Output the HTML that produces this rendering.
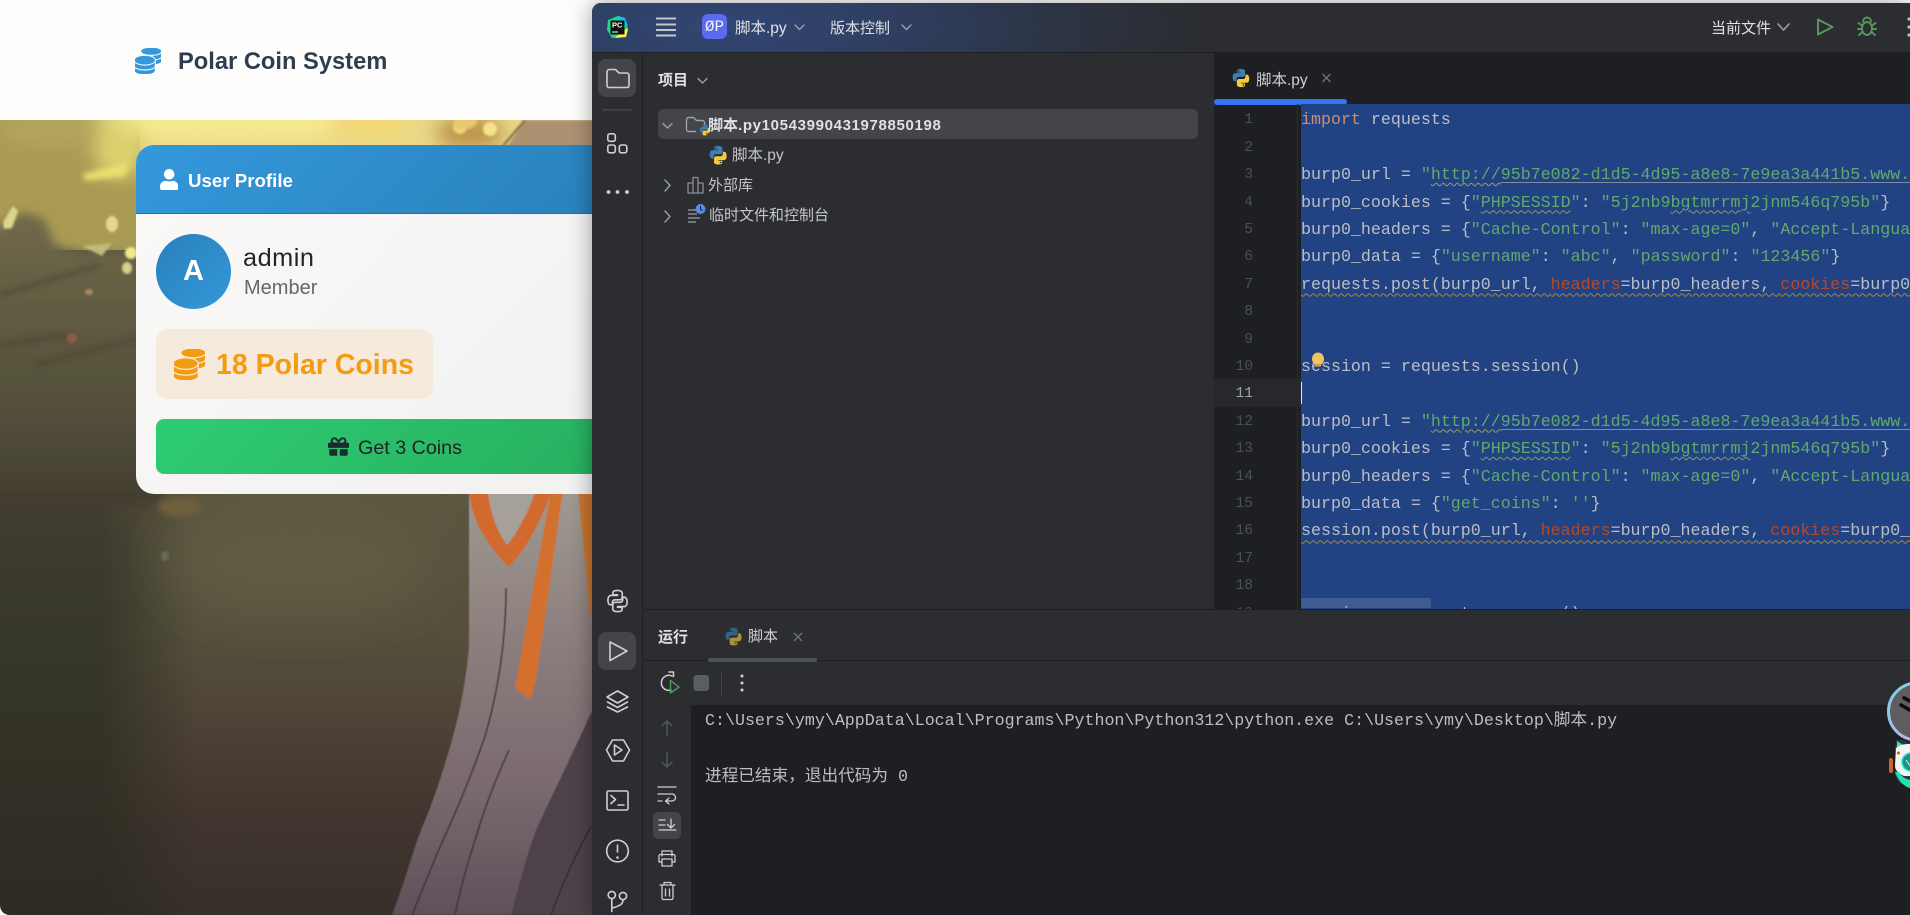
<!DOCTYPE html>
<html lang="zh-CN">
<head>
<meta charset="utf-8">
<title>Polar Coin System</title>
<style>
html,body{margin:0;padding:0;width:1910px;height:915px;overflow:hidden;background:#fff}
body{position:relative;font-family:"Liberation Sans","Noto Sans CJK SC",sans-serif}
.a{position:absolute}
.t{position:absolute;white-space:nowrap;line-height:30px;height:30px}
.ui{color:#dfe1e5;font-size:15px}
.c{position:absolute;left:0;white-space:pre;height:27.4px;line-height:27.4px}
.code{font-family:"Liberation Mono","Noto Sans CJK SC",monospace;font-size:16.65px;color:#bcbec4}
.s{color:#62a870}.k{color:#cf8e6d}.p{color:#b4492a}
.u{text-decoration:underline;text-decoration-color:#7d8aa5;text-underline-offset:3px}
.w1{text-decoration:underline wavy #9aa05a 1px;text-underline-offset:3px}
.w2{text-decoration:underline wavy #8d9a5f 1px;text-underline-offset:3px}
.warn{text-decoration:underline wavy #a08a4a 1px;text-underline-offset:4px}
.n{position:absolute;width:40px;left:1213px;text-align:right;font-family:"Liberation Mono",monospace;font-size:14.6px;height:27.4px;line-height:29.4px;color:#4b5059}
</style>
</head>
<body>

<!-- page background painting -->
<div class="a" style="left:0;top:120px;width:600px;height:795px;background:linear-gradient(180deg,#5c5840 360px,#55503c 512px,#4c4136 612px,#40352e 700px,#36302a 795px)"></div>
<div class="a" style="left:0;top:494px;width:200px;height:421px;background:linear-gradient(180deg,#423d31 0,#38382b 110px,#2e2b22 421px);-webkit-mask-image:linear-gradient(90deg,#000 100px,transparent 195px);mask-image:linear-gradient(90deg,#000 100px,transparent 195px)"></div>
<svg class="a" style="left:0;top:0" width="600" height="915" viewBox="0 0 600 915">
<defs>
<filter id="b30" x="-60%" y="-60%" width="220%" height="220%"><feGaussianBlur stdDeviation="24"/></filter>
<filter id="b10" x="-40%" y="-40%" width="180%" height="180%"><feGaussianBlur stdDeviation="9"/></filter>
<filter id="b5" x="-20%" y="-20%" width="140%" height="140%"><feGaussianBlur stdDeviation="5"/></filter>
<filter id="b3" x="-40%" y="-40%" width="180%" height="180%"><feGaussianBlur stdDeviation="3"/></filter>
<filter id="b1" x="-20%" y="-20%" width="140%" height="140%"><feGaussianBlur stdDeviation="1"/></filter>
<filter id="b05" x="-20%" y="-20%" width="140%" height="140%"><feGaussianBlur stdDeviation=".5"/></filter>
<linearGradient id="ridge" gradientUnits="userSpaceOnUse" x1="0" y1="230" x2="0" y2="500">
<stop offset="0" stop-color="#6e6749"/><stop offset=".35" stop-color="#5e5a40"/><stop offset=".7" stop-color="#524d3a"/><stop offset="1" stop-color="#423d31"/>
</linearGradient>
<linearGradient id="fig" x1="0" y1="0" x2="0" y2="1">
<stop offset="0" stop-color="#a09c92"/><stop offset=".4" stop-color="#8b7c7c"/><stop offset=".7" stop-color="#7a6a70"/><stop offset="1" stop-color="#5f5059"/>
</linearGradient>
</defs>
<rect x="0" y="120" width="600" height="130" fill="#a99b54"/>
<rect x="140" y="120" width="460" height="30" fill="#e8d888"/>
<g filter="url(#b30)">
<ellipse cx="300" cy="560" rx="130" ry="55" fill="#5f5b42"/>
</g>
<g filter="url(#b10)">
<ellipse cx="230" cy="122" rx="150" ry="20" fill="#f6e88f"/>
<ellipse cx="55" cy="130" rx="60" ry="16" fill="#b5a45c"/>
<ellipse cx="120" cy="150" rx="26" ry="28" fill="#dcd06e"/>
<ellipse cx="370" cy="125" rx="42" ry="16" fill="#f3d878"/>
<ellipse cx="470" cy="133" rx="34" ry="18" fill="#bd9650"/>
</g>
<path filter="url(#b5)" d="M-30 505V240L25 212L45 220L55 245L85 253L160 255V505Z" fill="url(#ridge)"/>
<g filter="url(#b3)">
<path d="M83 174l47-13-5 15-40 5z" fill="#e8e070"/>
<ellipse cx="180" cy="507" rx="22" ry="10" fill="#6e5f3c"/>
<g fill="none" stroke="#3f3b2c" stroke-width="4" opacity=".55">
<path d="M0 295L100 265"/>
<path d="M0 345L70 335"/>
<path d="M35 365L140 338"/>
</g>
</g>
<g filter="url(#b1)">
<path d="M3 222l10-16 5 5-6 17-8 1z" fill="#dcd68c"/>
<ellipse cx="112" cy="224" rx="6" ry="8" fill="#e4da88"/>
<ellipse cx="131" cy="253" rx="6" ry="6" fill="#f2e78e"/>
<ellipse cx="127" cy="268" rx="5" ry="6" fill="#d8cf88"/>
<path d="M82 246l30-3-10 13z" fill="#c2b879"/>
<ellipse cx="89" cy="292" rx="4" ry="3" fill="#a88a62"/>
<ellipse cx="72" cy="338" rx="5" ry="5" fill="#8f5a48"/>
<ellipse cx="165" cy="556" rx="4" ry="5" fill="#6a6c52"/>
<ellipse cx="460" cy="127" rx="7" ry="7" fill="#f0d278"/>
<ellipse cx="490" cy="129" rx="7" ry="7" fill="#f6e28a"/>
<ellipse cx="465" cy="122" rx="12" ry="7" fill="#e9c670"/>
<path d="M525 120L600 120V150H505Z" fill="#ad9272"/>
<path d="M525 120L503 146" stroke="#7a5a38" stroke-width="2"/>
</g>
<!-- figure -->
<g filter="url(#b05)">
<path d="M469 480L469 647C466 680 460 712 452 740C442 775 432 805 421 830C410 860 402 890 392 915H600V480Z" fill="url(#fig)"/>
<path d="M600 700L591 713C572 755 552 795 536 830C525 860 518 890 511 915H600Z" fill="#4d4249"/>
<path d="M469 490C470 510 478 528 490 545C497 555 503 562 509 567C525 550 540 525 552 490H536C528 512 518 532 507 545C498 532 490 515 488 490Z" fill="#d2692f"/>
<path d="M488 490C490 515 498 532 507 545C518 532 528 512 536 490Z" fill="#a5a198"/>
<path d="M551 490H563L536 680L530 700L515 688Z" fill="#d4702d"/>
<path d="M578 490H592V622L590 615Z" fill="#c9752f"/>
<path d="M506 588C506 640 498 690 486 733C472 775 456 812 440 847C430 870 421 893 412 915" fill="none" stroke="#3f3238" stroke-width="1.5"/>
<path d="M509 750C495 780 484 810 475 840C467 865 460 890 455 915" fill="none" stroke="#3f3238" stroke-width="1.5"/>
<path d="M591 827C575 855 562 885 551 915" fill="none" stroke="#332a30" stroke-width="1.5"/>
</g>
<path d="M0 905V915H10C4 915 0 911 0 905Z" fill="#fff"/>
</svg>

<!-- page header -->
<div class="a" style="left:0;top:0;width:600px;height:120px;background:#fefdfb"></div>
<svg class="a" style="left:135px;top:48px" width="26" height="26" viewBox="0 0 512 512"><path fill="#3498db" stroke="#3498db" stroke-width="12" d="M0 405.3V448c0 35.3 86 64 192 64s192-28.7 192-64v-42.7C342.7 434.4 267.2 448 192 448S41.3 434.4 0 405.3zM320 128c106 0 192-28.7 192-64S426 0 320 0 128 28.7 128 64s86 64 192 64zM0 300.4V352c0 35.3 86 64 192 64s192-28.7 192-64v-51.6c-41.3 34-116.9 51.6-192 51.6S41.3 334.4 0 300.4zm416 11c57.3-11.1 96-31.7 96-55.4v-42.7c-23.2 16.4-57.3 27.6-96 34.5v63.6zM192 160C86 160 0 195.8 0 240s86 80 192 80 192-35.8 192-80-86-80-192-80zm219.3 56.3c60-10.8 100.7-32 100.7-56.3v-42.7c-35.5 25.1-96.5 38.6-160.7 41.8 29.5 14.3 51.2 33.5 60 57.2z"/></svg>
<div class="t" style="left:178px;top:47px;font-size:23.7px;font-weight:700;color:#2c3e50">Polar Coin System</div>

<!-- card -->
<div class="a" style="left:136px;top:145px;width:500px;height:349px;border-radius:18px;overflow:hidden;background:linear-gradient(135deg,#fbfaf7,#f5f4f4 55%,#f2f1ef)">
  <div class="a" style="left:0;top:0;width:100%;height:69px;background:linear-gradient(135deg,#3498db,#2980b9);border-bottom:1px solid #2471a3;box-sizing:border-box"></div>
  <div class="a" style="left:20px;top:89px;width:75px;height:75px;border-radius:50%;background:linear-gradient(135deg,#2980b9,#3498db)"></div>
  <div class="a" style="left:20px;top:184px;width:277px;height:70px;border-radius:12px;background:#f5eadc"></div>
  <div class="a" style="left:20px;top:274px;width:480px;height:55px;border-radius:8px;background:linear-gradient(135deg,#2ecc71,#27ae60)"></div>
</div>
<svg class="a" style="left:160px;top:169px" width="18.4" height="21" viewBox="0 0 448 512"><path fill="#fff" d="M224 256c70.7 0 128-57.3 128-128S294.7 0 224 0 96 57.3 96 128s57.3 128 128 128zm89.6 32h-16.7c-22.2 10.2-46.9 16-72.9 16s-50.6-5.8-72.9-16h-16.7C60.2 288 0 348.2 0 422.4V464c0 26.5 21.5 48 48 48h352c26.5 0 48-21.5 48-48v-41.6c0-74.2-60.2-134.4-134.4-134.4z"/></svg>
<div class="t" style="left:188px;top:166px;font-size:18.7px;font-weight:700;color:#fff">User Profile</div>
<div class="t" style="left:156px;top:256px;width:75px;text-align:center;font-size:29px;font-weight:700;color:#fff">A</div>
<div class="t" style="left:243px;top:243px;font-size:25.3px;color:#212529;letter-spacing:.5px">admin</div>
<div class="t" style="left:244px;top:273px;font-size:20px;color:#666">Member</div>
<svg class="a" style="left:174px;top:349px" width="31" height="31" viewBox="0 0 512 512"><path fill="#f39c12" stroke="#f39c12" stroke-width="12" d="M0 405.3V448c0 35.3 86 64 192 64s192-28.7 192-64v-42.7C342.7 434.4 267.2 448 192 448S41.3 434.4 0 405.3zM320 128c106 0 192-28.7 192-64S426 0 320 0 128 28.7 128 64s86 64 192 64zM0 300.4V352c0 35.3 86 64 192 64s192-28.7 192-64v-51.6c-41.3 34-116.9 51.6-192 51.6S41.3 334.4 0 300.4zm416 11c57.3-11.1 96-31.7 96-55.4v-42.7c-23.2 16.4-57.3 27.6-96 34.5v63.6zM192 160C86 160 0 195.8 0 240s86 80 192 80 192-35.8 192-80-86-80-192-80zm219.3 56.3c60-10.8 100.7-32 100.7-56.3v-42.7c-35.5 25.1-96.5 38.6-160.7 41.8 29.5 14.3 51.2 33.5 60 57.2z"/></svg>
<div class="t" style="left:216px;top:350px;font-size:28.5px;font-weight:700;color:#f39c12">18 Polar Coins</div>
<svg class="a" style="left:328px;top:436px" width="21" height="21" viewBox="0 0 512 512"><path fill="#1f2a30" d="M32 448c0 17.7 14.3 32 32 32h160V320H32v128zm256 32h160c17.7 0 32-14.3 32-32V320H288v160zm192-320h-42.1c6.2-12.1 10.1-25.5 10.1-40 0-48.5-39.5-88-88-88-41.6 0-68.5 21.3-103 68.3-34.5-47-61.4-68.3-103-68.3-48.5 0-88 39.5-88 88 0 14.5 3.8 27.9 10.1 40H32c-17.7 0-32 14.3-32 32v80c0 8.8 7.2 16 16 16h480c8.8 0 16-7.2 16-16v-80c0-17.7-14.3-32-32-32zm-326.1 0c-22.1 0-40-17.9-40-40s17.9-40 40-40c19.9 0 34.6 3.3 86.1 80h-86.1zm206.1 0h-86.1c51.4-76.5 65.7-80 86.1-80 22.1 0 40 17.9 40 40s-17.9 40-40 40z"/></svg>
<div class="t" style="left:358px;top:433px;font-size:19.7px;color:#222">Get 3 Coins</div>

<!-- IDE window -->
<div class="a" style="left:592px;top:3px;width:1318px;height:912px;background:#2b2d30;border-radius:9px 0 0 0;box-shadow:0 0 22px rgba(0,0,0,.38);overflow:hidden">
  <!-- titlebar tint -->
  <div class="a" style="left:0;top:0;width:100%;height:49px;background:radial-gradient(ellipse 480px 130px at 130px 24px,#314674 0%,#2f3f62 35%,#2c3444 70%,#2b2d30 100%)"></div>
  <div class="a" style="left:0;top:49px;width:100%;height:1px;background:#1e1f22"></div>
  <div class="a" style="left:50px;top:50px;width:1px;height:862px;background:#1e1f22"></div>
  <!-- editor area -->
  <div class="a" style="left:622px;top:50px;width:696px;height:556px;background:#1e1f22"></div>
  <!-- bottom panel -->
  <div class="a" style="left:51px;top:606px;width:1267px;height:1px;background:#1e1f22"></div>
  <div class="a" style="left:51px;top:657px;width:1267px;height:1px;background:#1e1f22"></div>
  <div class="a" style="left:99px;top:702px;width:1219px;height:210px;background:#1e1f22"></div>
  <!-- active boxes -->
  <div class="a" style="left:6px;top:56px;width:38px;height:38px;border-radius:8px;background:#43454a"></div>
  <div class="a" style="left:6px;top:629px;width:38px;height:38px;border-radius:8px;background:#43454a"></div>
  <div class="a" style="left:61px;top:809px;width:28px;height:27px;border-radius:5px;background:#43454a"></div>
  <div class="a" style="left:66px;top:106px;width:540px;height:30px;border-radius:5px;background:#43454a"></div>
  <div class="a" style="left:116px;top:655px;width:109px;height:4px;border-radius:2px;background:#4e5157"></div>
  <div class="a" style="left:622px;top:96px;width:133px;height:6px;border-radius:3px;background:#3574f0"></div>
</div>

<!-- editor contents -->
<div class="a" style="left:1301px;top:104px;width:609px;height:505px;background:#214283"></div>
<div class="a" style="left:1297px;top:104px;width:1px;height:505px;background:#2b2d30"></div>
<div class="a" style="left:1214px;top:379px;width:87px;height:28px;background:#26282e"></div>
<div class="a" style="left:1301px;top:598px;width:130px;height:10px;background:#3f5b8f"></div>
<div class="a" style="left:1301px;top:382px;width:1px;height:22px;background:#e6e6e6"></div>

<div class="a" style="left:0;top:0;width:1910px;height:609px;overflow:hidden">
<div class="n" style="top:106.3px">1</div>
<div class="n" style="top:133.7px">2</div>
<div class="n" style="top:161.1px">3</div>
<div class="n" style="top:188.5px">4</div>
<div class="n" style="top:215.9px">5</div>
<div class="n" style="top:243.3px">6</div>
<div class="n" style="top:270.7px">7</div>
<div class="n" style="top:298.1px">8</div>
<div class="n" style="top:325.5px">9</div>
<div class="n" style="top:352.9px">10</div>
<div class="n" style="top:380.3px;color:#a1a3ab">11</div>
<div class="n" style="top:407.7px">12</div>
<div class="n" style="top:435.1px">13</div>
<div class="n" style="top:462.5px">14</div>
<div class="n" style="top:489.9px">15</div>
<div class="n" style="top:517.3px">16</div>
<div class="n" style="top:544.7px">17</div>
<div class="n" style="top:572.1px">18</div>
<div class="n" style="top:599.5px">19</div>

<div class="a code" style="left:1301px;top:0;width:609px;height:609px;overflow:hidden">
<div class="c" style="top:106.3px"><span class="k">import</span> requests</div>
<div class="c" style="top:161.1px">burp0_url = <span class="s">"<span class="w1">http://</span><span class="u">95b7e082-d1d5-4d95-a8e8-7e9ea3a441b5.www.polarctf.com:8090/</span>"</span></div>
<div class="c" style="top:188.5px">burp0_cookies = {<span class="s">"<span class="w2">PHPSESSID</span>"</span>: <span class="s">"5j2nb9<span class="w2">bgtmrrmj</span>2jnm546q795b"</span>}</div>
<div class="c" style="top:215.9px">burp0_headers = {<span class="s">"Cache-Control"</span>: <span class="s">"max-age=0"</span>, <span class="s">"Accept-Language"</span>: <span class="s">"zh-CN,zh;q=0.9"</span>}</div>
<div class="c" style="top:243.3px">burp0_data = {<span class="s">"username"</span>: <span class="s">"abc"</span>, <span class="s">"password"</span>: <span class="s">"123456"</span>}</div>
<div class="c" style="top:270.7px"><span class="warn">requests.post(burp0_url, <span class="p">headers</span>=burp0_headers, <span class="p">cookies</span>=burp0_cookies, <span class="p">data</span>=burp0_data)</span></div>
<div class="c" style="top:352.9px">session = requests.session()</div>
<div class="c" style="top:407.7px">burp0_url = <span class="s">"<span class="w1">http://</span><span class="u">95b7e082-d1d5-4d95-a8e8-7e9ea3a441b5.www.polarctf.com:8090/</span>"</span></div>
<div class="c" style="top:435.1px">burp0_cookies = {<span class="s">"<span class="w2">PHPSESSID</span>"</span>: <span class="s">"5j2nb9<span class="w2">bgtmrrmj</span>2jnm546q795b"</span>}</div>
<div class="c" style="top:462.5px">burp0_headers = {<span class="s">"Cache-Control"</span>: <span class="s">"max-age=0"</span>, <span class="s">"Accept-Language"</span>: <span class="s">"zh-CN,zh;q=0.9"</span>}</div>
<div class="c" style="top:489.9px">burp0_data = {<span class="s">"get_coins"</span>: <span class="s">''</span>}</div>
<div class="c" style="top:517.3px"><span class="warn">session.post(burp0_url, <span class="p">headers</span>=burp0_headers, <span class="p">cookies</span>=burp0_cookies, <span class="p">data</span>=burp0_data)</span></div>
<div class="c" style="top:599.5px">    i           t         ()</div>
</div>
</div>

<!-- icons overlay -->
<svg class="a" style="left:0;top:0" width="1910" height="915" viewBox="0 0 1910 915">
<defs>
<g id="py">
<path fill="#3d7fb5" d="M11.9 1C6.9 1 7.2 3.2 7.2 3.2v2.3h4.8v.7H5.3S2 5.8 2 11s2.9 5 2.9 5h1.7v-2.4s-.1-2.9 2.8-2.9h4.8s2.7 0 2.7-2.6V3.7S17 1 11.9 1zM9.2 2.6a.9.9 0 1 1 0 1.8.9.9 0 0 1 0-1.8z"/>
<path fill="#f4c93e" d="M12.1 23c5 0 4.7-2.2 4.7-2.2v-2.3H12v-.7h6.7s3.3.4 3.3-4.8-2.9-5-2.9-5h-1.7v2.4s.1 2.9-2.8 2.9H9.8s-2.7 0-2.7 2.6v4.4S6.7 23 12.1 23zm2.7-1.6a.9.9 0 1 1 0-1.8.9.9 0 0 1 0 1.8z"/>
</g>
<linearGradient id="ring" x1="0" y1="0" x2="1" y2="1"><stop offset="0" stop-color="#7fd3e8"/><stop offset="1" stop-color="#c8a8e8"/></linearGradient>
</defs>

<!-- titlebar -->
<polygon points="608,20 618,16 625,18 628,30 626,37 612,38 607,30" fill="#21d789"/>
<polygon points="618,16 625,18 628,26 622,24" fill="#07c3f2"/>
<polygon points="628,28 626,37 615,38 620,33" fill="#fcf84a"/>
<rect x="610.5" y="20.5" width="14" height="14" fill="#111"/>
<text x="612" y="27.5" font-family="Liberation Sans" font-weight="700" font-size="7.5" fill="#fff">PC</text>
<rect x="612" y="31.5" width="6" height="1" fill="#fff"/>
<g stroke="#c4c6cc" stroke-width="2">
<path d="M656 18.5h20M656 24.5h20M656 30h20M656 35.5h20"/>
</g>
<rect x="702" y="14" width="25" height="25" rx="6" fill="#5a6bf0"/>
<g fill="none" stroke="#9da0a8" stroke-width="1.4" stroke-linecap="round" stroke-linejoin="round">
<path d="M795 25l4.5 4.5 4.5-4.5"/>
<path d="M902 25l4.5 4.5 4.5-4.5"/>
<path d="M1778 24l5.5 6 5.5-6" stroke-width="1.6"/>
<path d="M698 78.5l4.5 4.5 4.5-4.5"/>
<path d="M663 123.5l4.5 4.5 4.5-4.5"/>
<path d="M665 180l5 5.5-5 5.5"/>
<path d="M665 211l5 5.5-5 5.5"/>
</g>
<path d="M1818 19.5L1832.5 27L1818 34.5Z" fill="none" stroke="#57965c" stroke-width="2" stroke-linejoin="round"/>
<g fill="none" stroke="#57965c" stroke-width="1.9" stroke-linecap="round">
<ellipse cx="1867" cy="28.5" rx="5" ry="6.5"/>
<path d="M1863 21.5a4 4 0 0 1 8 0"/>
<path d="M1858.5 23l3.5 2.5M1875.5 23l-3.5 2.5M1858 29h4M1876 29h-4M1859 35l3-2.5M1875 35l-3-2.5"/>
</g>
<circle cx="1909" cy="19" r="1.6" fill="#bcbec4"/><circle cx="1909" cy="27" r="1.6" fill="#bcbec4"/><circle cx="1909" cy="35" r="1.6" fill="#bcbec4"/>

<!-- left rail -->
<g fill="none" stroke="#ced0d6" stroke-width="1.6" stroke-linejoin="round" stroke-linecap="round">
<path d="M607 72a2.5 2.5 0 0 1 2.5-2.5h6l3.5 3.5h8a2 2 0 0 1 2 2v10.5a2 2 0 0 1-2 2h-18a2 2 0 0 1-2-2Z"/>
<rect x="607.8" y="133.8" width="7.5" height="7.5" rx="2"/>
<rect x="607.8" y="145" width="7.5" height="7.8" rx="2"/>
<rect x="619.3" y="145" width="7.5" height="7.8" rx="2"/>
<g transform="translate(606,589.5) scale(.96)" stroke-width="1.7"><path d="M11.9 1C6.9 1 7.2 3.2 7.2 3.2v2.3h4.8v.7H5.3S2 5.8 2 11s2.9 5 2.9 5h1.7v-2.4s-.1-2.9 2.8-2.9h4.8s2.7 0 2.7-2.6V3.7S17 1 11.9 1z"/><path d="M12.1 23c5 0 4.7-2.2 4.7-2.2v-2.3H12v-.7h6.7s3.3.4 3.3-4.8-2.9-5-2.9-5h-1.7v2.4s.1 2.9-2.8 2.9H9.8s-2.7 0-2.7 2.6v4.4S6.7 23 12.1 23z"/></g>
<path d="M610 642L627 651L610 660.5Z"/>
<path d="M617.5 691L628 697L617.5 703L607 697Z"/>
<path d="M607.5 702l10 5.5 10-5.5"/>
<path d="M607.5 707l10 5 10-5"/>
<path d="M606.5 750L612.5 740H623.5L629.5 750L623.5 761H612.5Z"/>
<path d="M614.5 745L622 750L614.5 755Z"/>
<rect x="607" y="791" width="21" height="19" rx="1.5"/>
<path d="M611 795.5l4.5 4-4.5 4M618 805h6"/>
<circle cx="617.5" cy="851" r="10.8"/>
<path d="M617.5 845v7"/>
<circle cx="611.8" cy="895" r="3.6"/>
<circle cx="623" cy="896" r="3.6"/>
<path d="M611.8 899v12.5M623 900c0 4-3 6-11 8"/>
<!-- project tree -->
<path d="M686.5 122v7.5a2 2 0 0 0 2 2h7M686.5 122v-2.5a2 2 0 0 1 2-2h5l3 3h6a2 2 0 0 1 2 2v2" stroke="#9da0a8" stroke-width="1.4"/>
<path d="M688 193V183h5V177.5h5V183h5V193ZM693 183V193M698 183V193" stroke="#8c8f96" stroke-width="1.3"/>
<!-- bottom toolbar -->
<path d="M672 676a7.5 7.5 0 1 0-1 14" stroke="#ced0d6" stroke-width="1.5"/>
<path d="M669 672h4.5v4.5" stroke="#ced0d6" stroke-width="1.5"/>
<path d="M670.5 680.5L679 687L670.5 693Z" stroke="#57965c" stroke-width="1.4"/>
<path d="M667 735V721M662 726l5-5 5 5" stroke="#55585e" stroke-width="1.4"/>
<path d="M667 753V767M662 762l5 5 5-5" stroke="#55585e" stroke-width="1.4"/>
<path d="M658 787h18M658 794h14a3.5 3.5 0 0 1 0 7h-6M669 798l-3.5 3 3.5 3M658 801h4" stroke="#ced0d6" stroke-width="1.3"/>
<path d="M659 820h6M659 825h6M659 830h17M671 819v9M667.5 824.5l3.5 3.5 3.5-3.5" stroke="#ced0d6" stroke-width="1.3"/>
<path d="M662 856v-5h10v5M662 862h-3v-6a1.5 1.5 0 0 1 1.5-1.5h13a1.5 1.5 0 0 1 1.5 1.5v6h-3M662 859h10v7h-10Z" stroke="#ced0d6" stroke-width="1.3"/>
<path d="M660 885h15M664 885v-2.5h7v2.5M662 885v13a1.5 1.5 0 0 0 1.5 1.5h8a1.5 1.5 0 0 0 1.5-1.5v-13M665.5 889v7M669.5 889v7" stroke="#ced0d6" stroke-width="1.3"/>
</g>
<circle cx="608.5" cy="192" r="1.9" fill="#ced0d6"/><circle cx="617.5" cy="192" r="1.9" fill="#ced0d6"/><circle cx="627" cy="192" r="1.9" fill="#ced0d6"/>
<rect x="602" y="109" width="30" height="1.5" fill="#43454a"/>
<circle cx="617.5" cy="857.5" r="1.3" fill="#ced0d6"/>
<use href="#py" transform="translate(699,124) scale(.5)"/>
<use href="#py" transform="translate(708,145) scale(.85)"/>
<use href="#py" transform="translate(1231,68) scale(.83)"/>
<use href="#py" transform="translate(724,627) scale(.8)" opacity=".65"/>

<!-- scratch icon -->
<path d="M688 210h8M688 214h9M688 218h12M688 222h8" stroke="#9da0a8" stroke-width="1.3"/>
<circle cx="700.5" cy="209" r="5" fill="#548af7"/>
<path d="M700.5 206v3.5l2 1" fill="none" stroke="#1e1f22" stroke-width="1"/>

<!-- close icons -->
<path d="M1322.5 74l8 8M1330.5 74l-8 8" stroke="#6f737a" stroke-width="1.3"/>
<path d="M794 633l8 8M802 633l-8 8" stroke="#6f737a" stroke-width="1.3"/>

<!-- bulb -->
<ellipse cx="1318" cy="359" rx="6" ry="6.5" fill="#f2c55c"/>
<rect x="1315" y="364" width="6" height="2.5" fill="#c9a24a"/>

<!-- run toolbar -->
<rect x="693.5" y="675" width="15.5" height="16" rx="3" fill="#5a5d63"/>
<rect x="721" y="671" width="1" height="24" fill="#43454a"/>
<circle cx="742" cy="676" r="1.5" fill="#ced0d6"/><circle cx="742" cy="683" r="1.5" fill="#ced0d6"/><circle cx="742" cy="690" r="1.5" fill="#ced0d6"/>

<!-- floating widget -->
<circle cx="1917" cy="711.5" r="28.5" fill="#5e5e60" stroke="url(#ring)" stroke-width="3"/>
<path d="M1904 698l12 6M1901 705l14 8" stroke="#0c0c0c" stroke-width="3.5" stroke-linecap="round"/>
<path d="M1896 740h8l6 4v40h-10l-5-8v-28Z" fill="#2a3a3a"/>
<path d="M1897 741l9 6-9 5Z" fill="#2ee6b8"/>
<path d="M1896 748c5-4 10-4 14-4v32h-6c-5-2-9-6-9-10Z" fill="#f2f4f4"/>
<circle cx="1911" cy="762" r="9" fill="#1d8f86" stroke="#2ee6c0" stroke-width="1.5"/>
<path d="M1906 760l5 7 3-10" fill="none" stroke="#a5f3e6" stroke-width="1.2"/>
<rect x="1889" y="758" width="4" height="15" rx="2" fill="#c9622f"/>
<circle cx="1898.5" cy="753" r="1.5" fill="#d9571f"/>
<path d="M1895 772c3 8 8 14 15 16v-8c-5-1-9-4-11-8Z" fill="#26e0b4"/>
</svg>

<!-- IDE text -->
<div class="t" style="left:702px;top:12px;width:25px;text-align:center;color:#f0f1f5;font:16px/30px 'Liberation Mono',monospace">ØP</div>
<div class="t ui" style="left:735px;top:14px;font-size:15.5px">脚本.py</div>
<div class="t ui" style="left:830px;top:14px">版本控制</div>
<div class="t ui" style="left:1711px;top:14px">当前文件</div>
<div class="t ui" style="left:658px;top:66px;font-weight:700">项目</div>
<div class="t ui" style="left:708px;top:111px;font-weight:700">脚本<span style="letter-spacing:.65px">.py10543990431978850198</span></div>
<div class="t ui" style="left:732px;top:141px;font-size:15.5px;color:#c4c6cc">脚本.py</div>
<div class="t ui" style="left:708px;top:171px;color:#c4c6cc">外部库</div>
<div class="t ui" style="left:709px;top:201px;color:#c4c6cc">临时文件和控制台</div>
<div class="t ui" style="left:1256px;top:66px;font-size:15.5px;color:#ced0d6">脚本.py</div>
<div class="t ui" style="left:658px;top:623px;font-weight:700">运行</div>
<div class="t ui" style="left:748px;top:622px;color:#ced0d6">脚本</div>
<div class="t code" style="left:705px;top:706px">C:\Users\ymy\AppData\Local\Programs\Python\Python312\python.exe C:\Users\ymy\Desktop\脚本.py</div>
<div class="t code" style="left:705px;top:762px">进程已结束，退出代码为 0</div>

</body>
</html>
